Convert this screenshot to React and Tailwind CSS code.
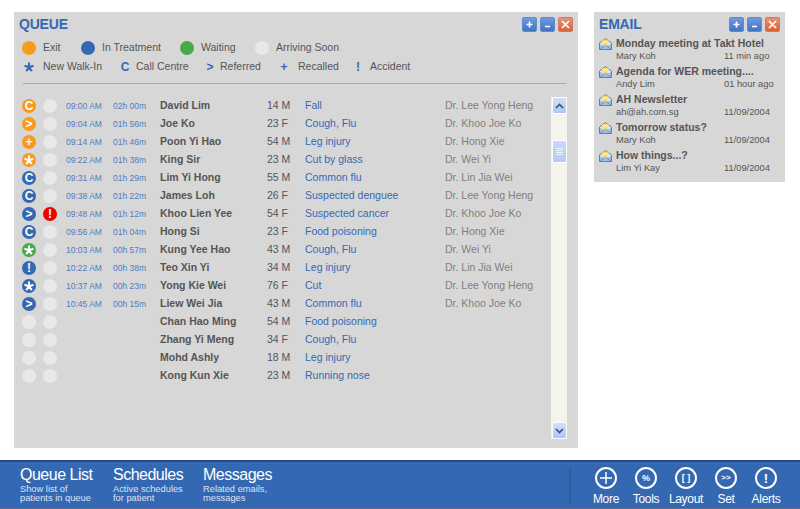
const patients = [
  { a: 'orange', g: 'C', b: null, t: '09:00 AM', w: '02h 00m', n: 'David Lim', s: '14 M', c: 'Fall', d: 'Dr. Lee Yong Heng' },
  { a: 'orange', g: '>', b: null, t: '09:04 AM', w: '01h 56m', n: 'Joe Ko', s: '23 F', c: 'Cough, Flu', d: 'Dr. Khoo Joe Ko' },
  { a: 'orange', g: '+', b: null, t: '09:14 AM', w: '01h 46m', n: 'Poon Yi Hao', s: '54 M', c: 'Leg injury', d: 'Dr. Hong Xie' },
  { a: 'orange', g: '*', b: null, t: '09:22 AM', w: '01h 38m', n: 'King Sir', s: '23 M', c: 'Cut by glass', d: 'Dr. Wei Yi' },
  { a: 'blue', g: 'C', b: null, t: '09:31 AM', w: '01h 29m', n: 'Lim Yi Hong', s: '55 M', c: 'Common flu', d: 'Dr. Lin Jia Wei' },
  { a: 'blue', g: 'C', b: null, t: '09:38 AM', w: '01h 22m', n: 'James Loh', s: '26 F', c: 'Suspected denguee', d: 'Dr. Lee Yong Heng' },
  { a: 'blue', g: '>', b: '!', t: '09:48 AM', w: '01h 12m', n: 'Khoo Lien Yee', s: '54 F', c: 'Suspected cancer', d: 'Dr. Khoo Joe Ko' },
  { a: 'blue', g: 'C', b: null, t: '09:56 AM', w: '01h 04m', n: 'Hong Si', s: '23 F', c: 'Food poisoning', d: 'Dr. Hong Xie' },
  { a: 'green', g: '*', b: null, t: '10:03 AM', w: '00h 57m', n: 'Kung Yee Hao', s: '43 M', c: 'Cough, Flu', d: 'Dr. Wei Yi' },
  { a: 'blue', g: '!', b: null, t: '10:22 AM', w: '00h 38m', n: 'Teo Xin Yi', s: '34 M', c: 'Leg injury', d: 'Dr. Lin Jia Wei' },
  { a: 'blue', g: '*', b: null, t: '10:37 AM', w: '00h 23m', n: 'Yong Kie Wei', s: '76 F', c: 'Cut', d: 'Dr. Lee Yong Heng' },
  { a: 'blue', g: '>', b: null, t: '10:45 AM', w: '00h 15m', n: 'Liew Wei Jia', s: '43 M', c: 'Common flu', d: 'Dr. Khoo Joe Ko' },
  { a: 'none', g: '', b: null, t: '', w: '', n: 'Chan Hao Ming', s: '54 M', c: 'Food poisoning', d: '' },
  { a: 'none', g: '', b: null, t: '', w: '', n: 'Zhang Yi Meng', s: '34 F', c: 'Cough, Flu', d: '' },
  { a: 'none', g: '', b: null, t: '', w: '', n: 'Mohd Ashly', s: '18 M', c: 'Leg injury', d: '' },
  { a: 'none', g: '', b: null, t: '', w: '', n: 'Kong Kun Xie', s: '23 M', c: 'Running nose', d: '' },
]

const emails = [
  { s: 'Monday meeting at Takt Hotel', f: 'Mary Koh', w: '11 min ago' },
  { s: 'Agenda for WER meeting....', f: 'Andy Lim', w: '01 hour ago' },
  { s: 'AH Newsletter', f: 'ah@ah.com.sg', w: '11/09/2004' },
  { s: 'Tomorrow status?', f: 'Mary Koh', w: '11/09/2004' },
  { s: 'How things...?', f: 'Lim Yi Kay', w: '11/09/2004' },
]

const dotColors = {
  orange: 'bg-[#f79a1e]',
  blue: 'bg-[#3568b3]',
  green: 'bg-[#48a948]',
  red: 'bg-[#f00000]',
  none: 'bg-[#e8e8e8]',
}

// five armed asterisk, same one in the legend and in the dots
function Star({ size, color }) {
  return (
    <svg width={size} height={size} viewBox="0 0 10 10">
      <path d="M5 5.300V.5M5 5.300L9.500 3.800M5 5.300L7.800 9.200M5 5.300L2.200 9.200M5 5.300L.5 3.800" stroke={color} strokeWidth="2" fill="none" />
    </svg>
  )
}

function Dot({ color, glyph }) {
  return (
    <span className={`w-[14px] h-[14px] rounded-full flex items-center justify-center text-white text-[12px] font-bold leading-none ${dotColors[color]}`}>
      {glyph === '*' ? <Star size={10} color="#fff" /> : glyph}
    </span>
  )
}

function WinButtons() {
  const blue = 'w-[15px] h-[15px] rounded-[2px] border border-[#5f8bcb] bg-gradient-to-b from-[#6f9be0] to-[#3f74c6] flex items-center justify-center'
  return (
    <div className="flex gap-[3px]">
      <span className={blue}>
        <svg width="9" height="9" viewBox="0 0 9 9"><path d="M4.500 1.500v6M1.500 4.500h6" stroke="#fff" strokeWidth="1.600" /></svg>
      </span>
      <span className={blue}>
        <svg width="9" height="9" viewBox="0 0 9 9"><path d="M2 6.500h5" stroke="#fff" strokeWidth="1.600" /></svg>
      </span>
      <span className="w-[15px] h-[15px] rounded-[2px] border border-[#cf7a5e] bg-gradient-to-b from-[#ea9273] to-[#dc6038] flex items-center justify-center">
        <svg width="11" height="11" viewBox="0 0 11 11"><path d="M2 2l7 7M9 2l-7 7" stroke="#fff" strokeWidth="1.700" /></svg>
      </span>
    </div>
  )
}

function MailIcon() {
  return (
    <svg width="13" height="12" viewBox="0 0 13 12" className="shrink-0">
      <path d="M.5 5L6.500.6 12.500 5v6.500H.5z" fill="#e6edf5" stroke="#5f7fa8" />
      <path d="M2 5l2-3h5l2 3-4.500 3z" fill="#f5d56a" />
      <path d="M3.500 3.500h6M3 5h7" stroke="#fff" strokeWidth=".6" />
      <path d="M1 6l5.500 2.500L12 6v5H1z" fill="#9fc2ea" />
      <path d="M1 11l5.500-3.500L12 11" fill="none" stroke="#5f7fa8" strokeWidth=".7" />
    </svg>
  )
}

function ScrollButton({ up }) {
  return (
    <span className="w-[15px] h-[17px] rounded-[2px] border border-white bg-gradient-to-b from-[#d3dffb] to-[#afc5f5] flex items-center justify-center shrink-0">
      <svg width="9" height="6" viewBox="0 0 9 6">
        <path d={up ? 'M1 5l3.500-3.500L8 5' : 'M1 1l3.500 3.500L8 1'} fill="none" stroke="#3f5374" strokeWidth="1.700" />
      </svg>
    </span>
  )
}

function Scrollbar() {
  return (
    <div className="w-[16px] self-stretch flex flex-col items-center bg-[#f5f3ec]">
      <ScrollButton up />
      <span className="mt-[26px] w-[15px] h-[23px] rounded-[2px] border border-white bg-gradient-to-b from-[#cbdafb] to-[#b3c8f6] flex flex-col items-center justify-center gap-[1px]">
        <i className="block w-[7px] h-px bg-[#eef3fe]" />
        <i className="block w-[7px] h-px bg-[#eef3fe]" />
        <i className="block w-[7px] h-px bg-[#eef3fe]" />
        <i className="block w-[7px] h-px bg-[#eef3fe]" />
      </span>
      <span className="flex-1" />
      <ScrollButton />
    </div>
  )
}

function Tool({ label, children }) {
  return (
    <div className="w-[40px] flex flex-col items-center mt-[3px]">
      <span className="w-[22px] h-[22px] rounded-full border-2 border-white flex items-center justify-center text-white font-bold leading-none">
        {children}
      </span>
      <span className="mt-[3px] text-[12px] leading-[14px] text-white tracking-[-0.3px]">{label}</span>
    </div>
  )
}

function Nav({ title, lines, w }) {
  return (
    <div className={`${w} -mt-[2px]`}>
      <div className="text-[16px] leading-[18px] text-white tracking-[-0.5px]">{title}</div>
      <div className="mt-[1px] text-[9.3px] leading-[9px] text-[#dbe5f3]">
        {lines.map((l) => <div key={l}>{l}</div>)}
      </div>
    </div>
  )
}

const legend = [['orange', 'Exit', 'w-[59px]'], ['blue', 'In Treatment', 'w-[99px]'], ['green', 'Waiting', 'w-[75px]'], ['none', 'Arriving Soon', '']]
const legend2 = [
  ['*', 'New Walk-In', 'w-[96px]', 'mr-[8px]'],
  ['C', 'Call Centre', 'w-[85px]', 'mr-[5px]'],
  ['>', 'Referred', 'w-[74px]', 'mr-[4px]'],
  ['+', 'Recalled', 'w-[74px]', 'mr-[8px]'],
  ['!', 'Accident', '', 'mr-[6px]'],
]

export default function App() {
  return (
    <div className="w-[800px] h-[509px] bg-white flex flex-col overflow-hidden font-['Liberation_Sans',Arial,sans-serif] text-[#555]">
      <div className="flex-1 min-h-0 flex items-start pl-[14px] pt-[12px] pb-[12px]">
        {/* Queue panel */}
        <section className="w-[564px] h-[436px] bg-[#d7d7d7] flex flex-col pl-[5px] pr-[5px] pt-[3px]">
          <div className="flex items-center justify-between h-[18px]">
            <h1 className="text-[14px] font-bold text-[#3568b3] tracking-[-0.2px]">QUEUE</h1>
            <WinButtons />
          </div>
          <div className="flex mt-[8px] pl-[3px] h-[14px] items-center text-[10.5px] whitespace-nowrap">
            {legend.map(([color, label, w]) => (
              <div key={label} className={`flex items-center gap-[7px] ${w}`}>
                <Dot color={color} />
                <span>{label}</span>
              </div>
            ))}
          </div>
          <div className="flex mt-[5px] pl-[4px] h-[14px] items-center text-[10.5px] whitespace-nowrap">
            {legend2.map(([glyph, label, w, gap]) => (
              <div key={label} className={`flex items-center ${w}`}>
                <span className={`w-[12px] flex justify-center text-[#3568b3] font-bold text-[12px] ${gap}`}>
                  {glyph === '*' ? <Star size={10} color="#3568b3" /> : glyph}
                </span>
                <span>{label}</span>
              </div>
            ))}
          </div>
          <div className="mt-[9px] ml-[4px] mr-[7px] h-px bg-[#aaaaaa]" />
          <div className="flex flex-1 min-h-0 mt-[13px] mb-[9px]">
            <div className="w-[532px] pl-[3px]">
              {patients.map((p) => (
                <div key={p.n} className="flex items-center h-[18px]">
                  <div className="w-[21px]"><Dot color={p.a} glyph={p.g} /></div>
                  <div className="w-[23px]"><Dot color={p.b ? 'red' : 'none'} glyph={p.b} /></div>
                  <div className="w-[47px] text-[8.5px] text-[#4f7cc0]">{p.t}</div>
                  <div className="w-[47px] text-[8.5px] text-[#4f7cc0]">{p.w}</div>
                  <div className="w-[107px] text-[10.5px] font-bold">{p.n}</div>
                  <div className="w-[38px] text-[10.5px]">{p.s}</div>
                  <div className="w-[140px] text-[10.5px] text-[#3568b3]">{p.c}</div>
                  <div className="text-[10.5px] text-[#808080]">{p.d}</div>
                </div>
              ))}
            </div>
            <Scrollbar />
          </div>
        </section>

        {/* Email panel */}
        <section className="ml-[16px] w-[191px] h-[170px] bg-[#d7d7d7] pl-[5px] pr-[5px] pt-[3px]">
          <div className="flex items-center justify-between h-[18px]">
            <h2 className="text-[14px] font-bold text-[#3568b3] tracking-[-0.2px]">EMAIL</h2>
            <WinButtons />
          </div>
          <div className="mt-[4px]">
            {emails.map((m) => (
              <div key={m.s} className="h-[28px]">
                <div className="flex items-center gap-[4px] h-[14px] text-[10.5px] font-bold whitespace-nowrap">
                  <MailIcon />
                  <span>{m.s}</span>
                </div>
                <div className="flex h-[12px] items-center pl-[17px] text-[9.3px] whitespace-nowrap">
                  <span className="w-[108px]">{m.f}</span>
                  <span>{m.w}</span>
                </div>
              </div>
            ))}
          </div>
        </section>
      </div>

      {/* Bottom bar */}
      <footer className="h-[49px] shrink-0 border-t-2 border-[#1f4a8c] border-b border-b-[#5a6f90] bg-[#3568b3] flex items-center pl-[20px]">
        <Nav title="Queue List" lines={['Show list of', 'patients in queue']} w="w-[93px]" />
        <Nav title="Schedules" lines={['Active schedules', 'for patient']} w="w-[90px]" />
        <Nav title="Messages" lines={['Related emails,', 'messages']} w="w-[366px]" />
        <div className="w-[2px] h-[35px] bg-[#2f5c9f] mr-[15px]" />
        <div className="flex">
          <Tool label="More"><svg width="14" height="14" viewBox="0 0 14 14"><path d="M7 1v12M1 7h12" stroke="#fff" strokeWidth="1.500" /></svg></Tool>
          <Tool label="Tools"><span className="text-[9px]">%</span></Tool>
          <Tool label="Layout"><span className="text-[9px]">[ ]</span></Tool>
          <Tool label="Set"><span className="text-[8px]">&gt;&gt;</span></Tool>
          <Tool label="Alerts"><span className="text-[13px]">!</span></Tool>
        </div>
      </footer>
    </div>
  )
}
